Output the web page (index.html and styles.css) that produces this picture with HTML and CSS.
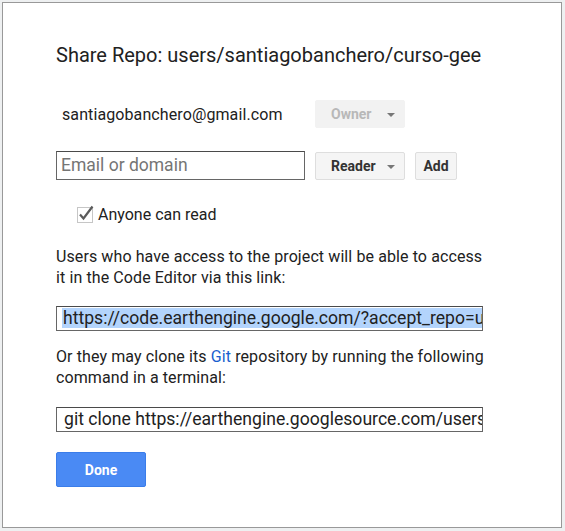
FILE: index.html
```html
<!DOCTYPE html>
<html>
<head>
<meta charset="utf-8">
<link rel="stylesheet" href="styles.css">
</head>
<body>
<div class="dialog">
  <h1 class="title">Share Repo: users/santiagobanchero/curso-gee</h1>
  <div class="row owner-row">
    <span class="owner-email">santiagobanchero@gmail.com</span>
    <button class="btn btn-menu disabled"><span>Owner</span><span class="caret"></span></button>
  </div>
  <div class="row add-row">
    <div class="field email-field"><span class="placeholder">Email or domain</span></div>
    <button class="btn btn-menu"><span>Reader</span><span class="caret"></span></button>
    <button class="btn btn-add">Add</button>
  </div>
  <label class="check-row">
    <svg class="checkbox" width="18" height="20" viewBox="0 0 18 20">
      <rect x="0.5" y="3.5" width="15" height="15" fill="#fff" stroke="#c6c6c6"/>
      <path d="M3 10.5 L6.5 14.5 L15.5 2.5" fill="none" stroke="#5b5b5b" stroke-width="2.2"/>
    </svg>
    <span>Anyone can read</span>
  </label>
  <p class="text text-first">Users who have access to the project will be able to access it in the Code Editor via this link:</p>
  <div class="field link-field first-link"><span class="selected">https://code.earthengine.google.com/?accept_repo=users/santiagobanchero/curso-gee</span></div>
  <p class="text text-second">Or they may clone its <a class="link" href="#">Git</a> repository by running the following command in a terminal:</p>
  <div class="field link-field git-field"><span>git clone https://earthengine.googlesource.com/users/santiagobanchero/curso-gee</span></div>
  <button class="btn btn-done">Done</button>
</div>
</body>
</html>
```

FILE: styles.css
```css
html, body {
  margin: 0;
  padding: 0;
}
body {
  background: #eef0f1;
  font-family: Roboto, "Liberation Sans", sans-serif;
  color: #212121;
  padding: 2px 3px 3px 2px;
  width: 565px;
  height: 531px;
  box-sizing: border-box;
}
.dialog {
  background: #fff;
  border: 1px solid #999;
  height: 526px;
  box-sizing: border-box;
  padding: 40px 0 0 53px;
  display: flex;
  flex-direction: column;
  align-items: flex-start;
}
.title {
  font-size: 20px;
  font-weight: 400;
  margin: 0 0 33px 0;
  line-height: 24px;
  color: #212121;
}
.row {
  display: flex;
  align-items: center;
}
.owner-row {
  height: 28px;
  margin-bottom: 23px;
}
.owner-email {
  font-size: 16px;
  letter-spacing: 0.1px;
  width: 253px;
  padding-left: 6px;
}
.btn {
  font-family: Roboto, "Liberation Sans", sans-serif;
  font-weight: 700;
  font-size: 14px;
  border: 1px solid #dedede;
  border-radius: 2px;
  background: #f5f5f5;
  color: #333;
  height: 28px;
  padding: 0;
  box-sizing: border-box;
  cursor: default;
}
.btn-menu {
  width: 90px;
  display: flex;
  align-items: center;
  padding-left: 15px;
  padding-right: 9px;
}
.disabled {
  color: #b8b8b8;
  border-color: #f2f2f2;
  background: #f2f2f2;
}
.caret {
  margin-left: auto;
  width: 0;
  height: 0;
  border-left: 4px solid transparent;
  border-right: 4px solid transparent;
  border-top: 4px solid #777;
  margin-top: 2px;
}
.add-row {
  gap: 10px;
  height: 29px;
  margin-bottom: 25px;
}
.add-row .btn {
  align-self: flex-end;
  height: 28px;
}
.field {
  border: 1px solid #666;
  border-top-color: #4a4a4a;
  box-sizing: border-box;
  background: #fff;
  white-space: nowrap;
  overflow: hidden;
}
.email-field {
  width: 249px;
  height: 29px;
  font-size: 17.5px;
  line-height: 27px;
  padding-left: 4px;
}
.placeholder {
  color: #757575;
}
.btn-add {
  width: 42px;
  text-align: center;
}
.check-row {
  display: flex;
  align-items: center;
  font-size: 16px;
  line-height: 20px;
  margin-left: 21px;
  gap: 3px;
  height: 20px;
  margin-bottom: 21px;
}
.checkbox {
  display: block;
  margin-top: -2px;
}
.text {
  font-size: 16px;
  letter-spacing: 0.1px;
  line-height: 21px;
  margin: 0;
  width: 432px;
}
.text-first {
  margin-bottom: 18px;
}
.text-second {
  margin-bottom: 19px;
}
.link {
  color: #1a5fce;
  text-decoration: none;
}
.link-field {
  width: 427px;
  height: 25px;
  font-size: 17.6px;
  line-height: 23px;
}
.first-link {
  padding-left: 6px;
  margin-bottom: 15px;
}
.git-field {
  padding-left: 7px;
  margin-bottom: 20px;
}
.selected {
  background: #b3d4fc;
  padding-left: 1px;
  margin-left: -1px;
}
.btn-done {
  width: 90px;
  height: 35px;
  background: #4a8af4;
  border: 1px solid #3b7de9;
  color: #fff;
  font-size: 14px;
}
```
